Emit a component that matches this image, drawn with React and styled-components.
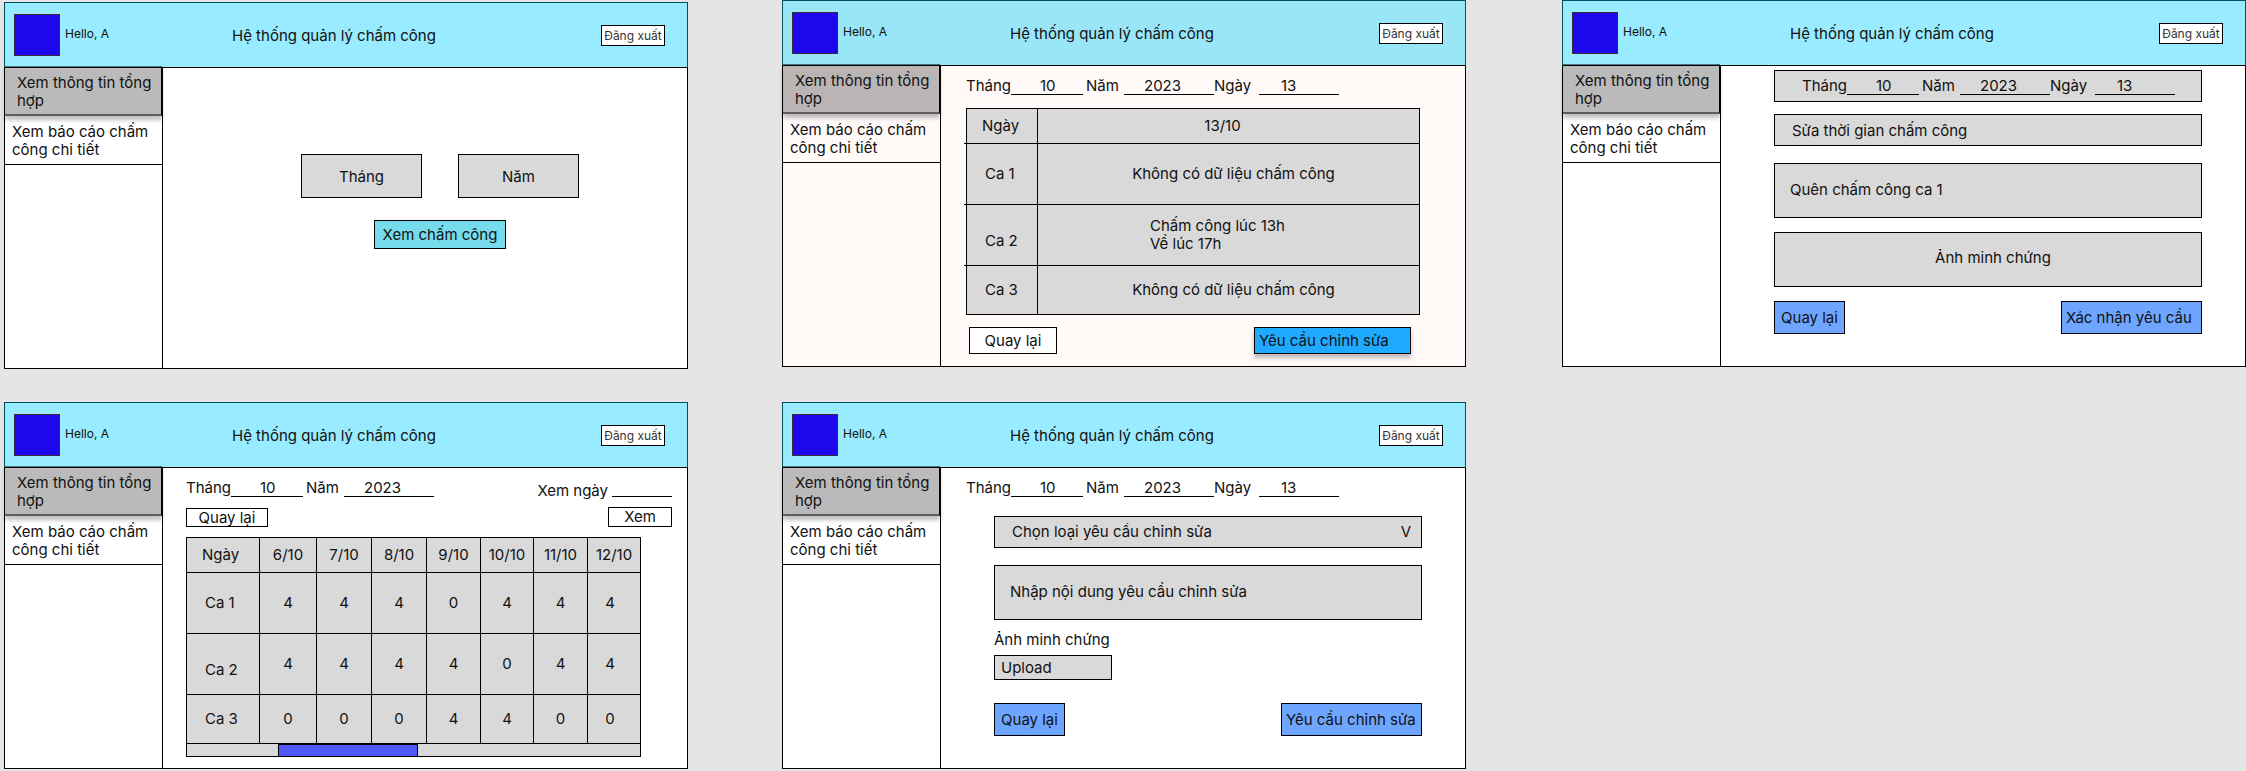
import React, { useId } from "react";
import styled, { createGlobalStyle, css } from "styled-components";

const GlobalStyle = createGlobalStyle`
  *, *::before, *::after { box-sizing: border-box; }
  body {
    margin: 0;
    background: #e5e5e5;
    color: #111;
    font-family: Inter, "Noto Sans", sans-serif;
    font-size: 15px;
    line-height: 18px;
  }
  button, input, select, textarea { font: inherit; color: inherit; border-radius: 0; margin: 0; }
  button { cursor: pointer; }
`;

const grey = "#d9d9d9";

const Board = styled.main`
  display: grid;
  grid-template-columns: minmax(0, 1fr) 94px minmax(0, 1fr) 96px minmax(0, 1fr);
  row-gap: 33px;
  padding: 0 0 2px 4px;
`;

const ScreenFrame = styled.section`
  grid-column: ${(p) => p.$column};
  margin-top: ${(p) => (p.$lowered ? "2px" : "0")};
  align-self: start;
  display: flex;
  flex-direction: column;
  min-height: 367px;
  background: ${(p) => (p.$warm ? "#fff9f8" : "#fff")};
`;

const Header = styled.header`
  display: flex;
  align-items: center;
  height: 66px;
  padding: 0 22px 0 9px;
  background: ${(p) => (p.$warm ? "#99e6f9" : "#99ebff")};
  border: 1px solid #00505f;
  border-bottom-color: #000;
`;

const User = styled.div`
  display: flex;
  align-items: center;
  gap: 5px;
  width: 218px;
  padding-bottom: 1px;
`;

const Avatar = styled.div`
  width: 46px;
  height: 42px;
  background: #1c08ea;
  border: 1px solid #3d2b3d;
`;

const Greeting = styled.span`
  font-size: 12px;
  line-height: 15px;
  padding-bottom: 2px;
`;

const Title = styled.h2`
  flex: 1;
  margin: 0;
  padding-top: 2px;
  font-size: 15px;
  font-weight: 400;
`;

const LogoutButton = styled.button`
  height: 21px;
  width: 64px;
  padding: 0;
  font-size: 12px;
  line-height: 15px;
  white-space: nowrap;
  color: #333;
  background: #fff;
  border: 1px solid #000;
`;

const Body = styled.div`
  flex: 1;
  display: flex;
  border: 1px solid #000;
  border-top: 0;
`;

const Sidebar = styled.nav`
  flex: 0 0 158px;
  border-right: 1px solid #000;
`;

const NavLink = styled.a`
  display: block;
  color: #111;
  text-decoration: none;
  padding: 7px 8px 5px 7px;
  border-bottom: 1px solid #000;
  ${(p) =>
    p.$active &&
    css`
      position: relative;
      margin-top: -2px;
      padding: 6px 0 4px 12px;
      background: ${p.$warm ? "#bab5b4" : "#bababa"};
      background-clip: padding-box;
      border-top: 2px solid rgba(0, 0, 0, 0.5);
      border-right: 1px solid #000;
      border-bottom: 2px solid #5d5d5d;
      box-shadow: 0 4px 4px rgba(0, 0, 0, 0.25);
    `}
`;

const Content = styled.div`
  flex: 1;
  min-width: 0;
  padding: ${(p) => p.$padding};
`;

function Screen({ column, lowered, warm, padding, children }) {
  return (
    <ScreenFrame $column={column} $lowered={lowered} $warm={warm}>
      <Header $warm={warm}>
        <User>
          <Avatar />
          <Greeting>Hello, A</Greeting>
        </User>
        <Title>Hệ thống quản lý chấm công</Title>
        <LogoutButton type="button">Đăng xuất</LogoutButton>
      </Header>
      <Body>
        <Sidebar>
          <NavLink href="#tong-hop" $active $warm={warm}>
            Xem thông tin tổng hợp
          </NavLink>
          <NavLink href="#chi-tiet">Xem báo cáo chấm công chi tiết</NavLink>
        </Sidebar>
        <Content $padding={padding}>{children}</Content>
      </Body>
    </ScreenFrame>
  );
}

const Button = styled.button`
  height: ${(p) => p.$height || 33}px;
  width: ${(p) => p.$width}px;
  padding: 0 4px;
  text-align: ${(p) => p.$align || "center"};
  white-space: nowrap;
  background: ${(p) => p.$color || "#fff"};
  border: 1px solid #000;
  box-shadow: ${(p) => (p.$raised ? "0 4px 4px rgba(0, 0, 0, 0.25)" : "none")};
`;

const Spread = styled.div`
  display: flex;
  justify-content: space-between;
  align-items: ${(p) => p.$items || "flex-start"};
  margin-top: ${(p) => p.$top || 0}px;
  padding: ${(p) => p.$padding || 0};
`;

/* Month / year / day line */

const DateRow = styled.div`
  display: flex;
  gap: ${(p) => p.$gap || 0}px;
`;

const DateLabel = styled.label`
  width: ${(p) => p.$width}px;
  padding: 1px 0 0 ${(p) => p.$inset || 0}px;
  white-space: nowrap;
`;

const LineInput = styled.input`
  width: ${(p) => p.$width}px;
  height: 19px;
  padding: 1px 0 0 ${(p) => p.$inset || 0}px;
  background: transparent;
  border: 0;
  border-bottom: 1px solid #000;
  outline: 0;
`;

function DateFields({ withDay }) {
  const id = useId();
  return (
    <DateRow>
      <DateLabel htmlFor={`${id}m`} $width={45}>Tháng</DateLabel>
      <LineInput id={`${id}m`} defaultValue="10" $width={72} $inset={29} />
      <DateLabel htmlFor={`${id}y`} $width={41} $inset={3}>Năm</DateLabel>
      <LineInput id={`${id}y`} defaultValue="2023" $width={90} $inset={20} />
      {withDay && (
        <>
          <DateLabel htmlFor={`${id}d`} $width={45}>Ngày</DateLabel>
          <LineInput id={`${id}d`} defaultValue="13" $width={80} $inset={22} />
        </>
      )}
    </DateRow>
  );
}

/* Month and year picker */

const Picker = styled.form`
  display: flex;
  flex-direction: column;
  align-items: center;
  gap: 22px;
`;

const PickerInput = styled.input`
  width: 121px;
  height: 44px;
  text-align: center;
  background: ${grey};
  border: 1px solid #000;
  &::placeholder { color: #111; opacity: 1; }
`;

/* Attendance tables */

const Table = styled.table`
  width: 100%;
  table-layout: fixed;
  border-spacing: 0;
  border-left: 1px solid #000;
  border-top: 1px solid #000;
  background: ${grey};
`;

const Row = styled.tr`
  height: ${(p) => p.$height}px;
`;

const cell = css`
  font-weight: 400;
  border-right: 1px solid #000;
  border-bottom: 1px solid #000;
`;

const Head = styled.th`
  ${cell}
  position: relative;
  text-align: left;
  padding: ${(p) => (p.$low ? 12 : 0)}px 0 0 ${(p) => (p.$day ? 15 : 18)}px;
  ${(p) =>
    p.$overhang &&
    css`
      &::before {
        content: "";
        position: absolute;
        left: -3px;
        bottom: -1px;
        width: 3px;
        height: 1px;
        background: #000;
      }
    `}
`;

const DayHead = styled.th`
  ${cell}
  padding: 0 ${(p) => p.$end || 0}px 0 ${(p) => p.$start || 0}px;
`;

const Cell = styled.td`
  ${cell}
  text-align: center;
  padding: 0 ${(p) => p.$end || 0}px 0 ${(p) => p.$start || 0}px;
`;

const Lines = styled.div`
  display: inline-block;
  text-align: left;
`;

const WeekBlock = styled.div`
  margin: 10px 31px 0 0;
`;

const ScrollTrack = styled.div`
  height: 13px;
  background: ${grey};
  border: 1px solid #000;
  border-top: 0;
`;

const ScrollThumb = styled.div`
  width: 31%;
  height: 12px;
  margin-left: 20%;
  background: #5058f7;
  border: 1px solid #000;
  border-bottom: 0;
`;

const days = ["6/10", "7/10", "8/10", "9/10", "10/10", "11/10", "12/10"];
const dayWidths = [57, 55, 55, 54, 53, 54, 53];
const shifts = [
  { name: "Ca 1", height: 61, hours: [4, 4, 4, 0, 4, 4, 4] },
  { name: "Ca 2", height: 61, low: true, hours: [4, 4, 4, 4, 0, 4, 4] },
  { name: "Ca 3", height: 49, hours: [0, 0, 0, 4, 4, 0, 0] },
];

function WeekTable() {
  return (
    <WeekBlock>
      <Table>
        <colgroup>
          <col width="73" />
          {dayWidths.map((w, i) => (
            <col key={i} width={w} />
          ))}
        </colgroup>
        <thead>
          <Row $height={35}>
            <Head $day scope="col">Ngày</Head>
            {days.map((d) => (
              <DayHead key={d} scope="col">{d}</DayHead>
            ))}
          </Row>
        </thead>
        <tbody>
          {shifts.map((s) => (
            <Row key={s.name} $height={s.height}>
              <Head scope="row" $low={s.low}>{s.name}</Head>
              {s.hours.map((h, i) => (
                <Cell key={i} $end={i === 6 ? 8 : 0}>{h}</Cell>
              ))}
            </Row>
          ))}
        </tbody>
      </Table>
      <ScrollTrack>
        <ScrollThumb />
      </ScrollTrack>
    </WeekBlock>
  );
}

const DayBlock = styled.div`
  margin-top: 13px;
`;

function DayTable() {
  return (
    <DayBlock>
      <Table>
        <colgroup>
          <col width="71" />
          <col />
        </colgroup>
        <thead>
          <Row $height={35}>
            <Head $day $overhang scope="col">Ngày</Head>
            <DayHead scope="col" $end={12}>13/10</DayHead>
          </Row>
        </thead>
        <tbody>
          <Row $height={61}>
            <Head $overhang scope="row">Ca 1</Head>
            <Cell $start={10}>Không có dữ liệu chấm công</Cell>
          </Row>
          <Row $height={61}>
            <Head $overhang $low scope="row">Ca 2</Head>
            <Cell $end={22}>
              <Lines>
                Chấm công lúc 13h
                <br />
                Về lúc 17h
              </Lines>
            </Cell>
          </Row>
          <Row $height={49}>
            <Head scope="row">Ca 3</Head>
            <Cell $start={10}>Không có dữ liệu chấm công</Cell>
          </Row>
        </tbody>
      </Table>
    </DayBlock>
  );
}

/* Request forms */

const field = css`
  display: block;
  width: 100%;
  background: ${grey};
  border: 1px solid #000;
  outline: 0;
`;

const RequestForm = styled.form`
  padding: ${(p) => p.$padding || 0};
`;

const DateBox = styled.div`
  ${field}
  height: 32px;
  padding: 5px 0 0 27px;
`;

const SelectWrap = styled.div`
  position: relative;
  margin-top: 19px;
`;

const Select = styled.select`
  ${field}
  appearance: none;
  height: 32px;
  padding: 0 30px 0 17px;
`;

const Chevron = styled.span`
  position: absolute;
  right: 11px;
  top: 7px;
  pointer-events: none;
`;

const TextField = styled.input`
  ${field}
  height: 32px;
  margin-top: 12px;
  padding: 0 17px;
`;

const TextArea = styled.textarea`
  ${field}
  resize: none;
  overflow: hidden;
  height: 55px;
  margin-top: 17px;
  padding: 17px 15px;
  &::placeholder { color: #111; opacity: 1; }
`;

const FieldLabel = styled.label`
  display: block;
  margin-top: 11px;
`;

const UploadButton = styled.button`
  display: block;
  width: 118px;
  height: 25px;
  margin-top: 6px;
  padding: 0 6px;
  text-align: left;
  background: ${grey};
  border: 1px solid #000;
`;

const ProofBox = styled.div`
  ${field}
  height: 55px;
  margin-top: 14px;
  padding: 16px 0 0 10px;
  text-align: center;
`;

const FilterLabel = styled.label`
  padding-top: 4px;
  white-space: nowrap;
`;

const actionBlue = "#6ea6ff";

export default function App() {
  return (
    <>
      <GlobalStyle />
      <Board>
        <Screen column={1} lowered padding="86px 0 0 30px">
          <Picker>
            <DateRow $gap={36}>
              <PickerInput placeholder="Tháng" aria-label="Tháng" />
              <PickerInput placeholder="Năm" aria-label="Năm" />
            </DateRow>
            <Button type="button" $width={132} $height={29} $color="#76dceb">
              Xem chấm công
            </Button>
          </Picker>
        </Screen>

        <Screen column={3} warm padding="10px 45px 0 25px">
          <DateFields withDay />
          <DayTable />
          <Spread $top={12} $padding="0 9px 0 3px">
            <Button type="button" $width={88} $height={27}>Quay lại</Button>
            <Button type="button" $width={157} $height={27} $color="#20aaff" $align="left" $raised>
              Yêu cầu chỉnh sửa
            </Button>
          </Spread>
        </Screen>

        <Screen column={5} padding="4px 43px 0 53px">
          <RequestForm>
            <DateBox>
              <DateFields withDay />
            </DateBox>
            <TextField defaultValue="Sửa thời gian chấm công" aria-label="Loại yêu cầu" />
            <TextArea defaultValue="Quên chấm công ca 1" aria-label="Nội dung yêu cầu" />
            <ProofBox>Ảnh minh chứng</ProofBox>
            <Spread $top={14}>
              <Button type="button" $width={71} $color={actionBlue}>Quay lại</Button>
              <Button type="button" $width={141} $color={actionBlue} $align="left">
                Xác nhận yêu cầu
              </Button>
            </Spread>
          </RequestForm>
        </Screen>

        <Screen column={1} padding="10px 15px 0 23px">
          <Spread>
            <DateFields />
            <DateRow $gap={4}>
              <FilterLabel htmlFor="view-day">Xem ngày</FilterLabel>
              <LineInput id="view-day" $width={60} />
            </DateRow>
          </Spread>
          <Spread $top={7} $items="flex-end">
            <Button type="button" $width={82} $height={19}>Quay lại</Button>
            <Button type="button" $width={64} $height={20}>Xem</Button>
          </Spread>
          <WeekTable />
        </Screen>

        <Screen column={3} padding="10px 43px 0 25px">
          <DateFields withDay />
          <RequestForm $padding="0 0 0 28px">
            <SelectWrap>
              <Select aria-label="Loại yêu cầu chỉnh sửa">
                <option>Chọn loại yêu cầu chỉnh sửa</option>
              </Select>
              <Chevron aria-hidden="true">V</Chevron>
            </SelectWrap>
            <TextArea placeholder="Nhập nội dung yêu cầu chỉnh sửa" aria-label="Nội dung yêu cầu" />
            <FieldLabel htmlFor="proof">Ảnh minh chứng</FieldLabel>
            <UploadButton id="proof" type="button">Upload</UploadButton>
            <Spread $top={23}>
              <Button type="button" $width={71} $color={actionBlue}>Quay lại</Button>
              <Button type="button" $width={141} $color={actionBlue} $align="left">
                Yêu cầu chỉnh sửa
              </Button>
            </Spread>
          </RequestForm>
        </Screen>
      </Board>
    </>
  );
}
